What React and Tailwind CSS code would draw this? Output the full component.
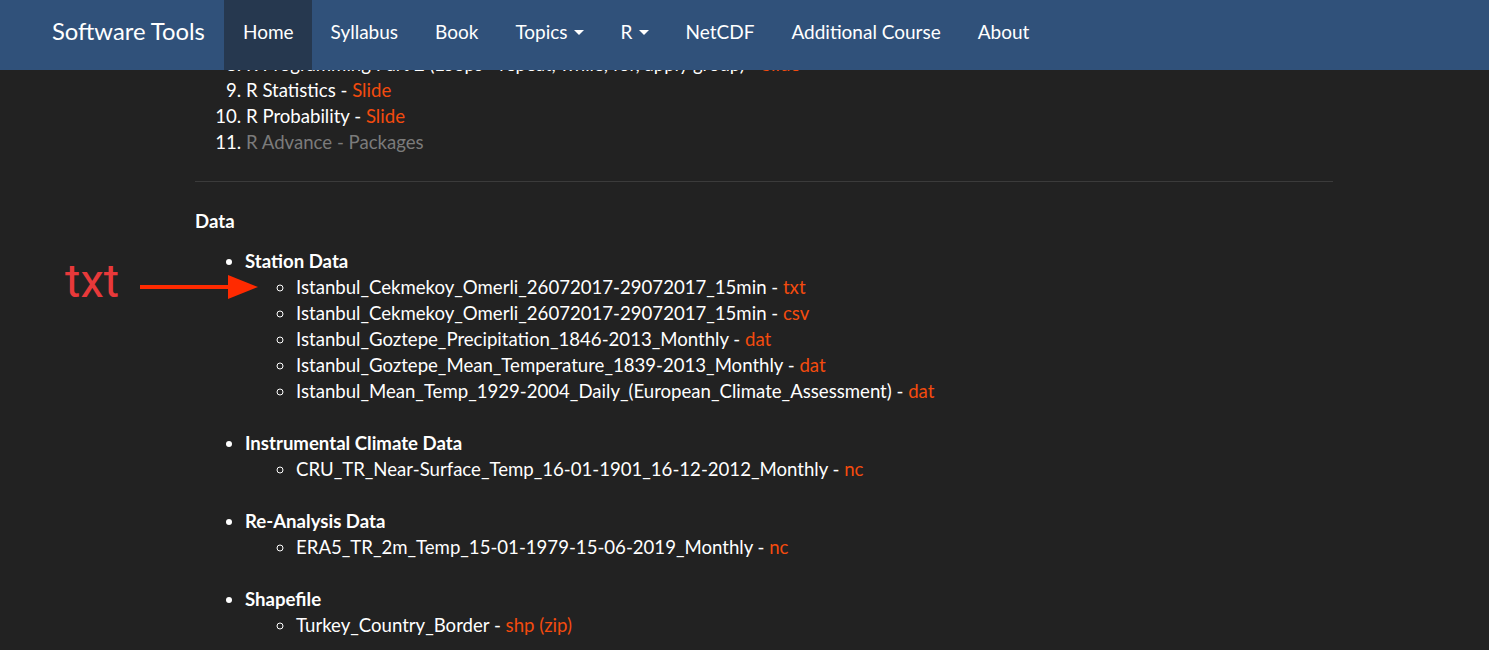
import React from "react";

const LINK = "text-[#f44b0e]";

function Caret() {
  return <span className="inline-block ml-[6px] align-middle w-0 h-0 border-l-[5px] border-r-[5px] border-t-[5px] border-l-transparent border-r-transparent border-t-white" />;
}

function NavItem({ children, active, caret }) {
  return (
    <div className={`h-full flex items-center px-[18.5px] pb-[6px] ${active ? "bg-[#26384f]" : ""}`}>
      <span>{children}</span>
      {caret && <Caret />}
    </div>
  );
}

function Sub({ name, link }) {
  return (
    <li className="list-[circle]">
      {name} - <span className={LINK}>{link}</span>
    </li>
  );
}

export default function App() {
  return (
    <div className="min-h-[650px] bg-[#222222] text-white text-[18.6px] leading-[26px] relative overflow-hidden" style={{ fontFamily: "Lato, 'Noto Sans', sans-serif" }}>
      <nav className="fixed top-0 left-0 right-0 h-[70px] bg-[#30517a] z-10 flex items-stretch text-white">
        <div className="flex items-center pl-[52px] pr-[19.5px] text-[23.8px] pb-[8px]">Software Tools</div>
        <div className="flex items-stretch text-[19px]">
          <NavItem active>Home</NavItem>
          <NavItem>Syllabus</NavItem>
          <NavItem>Book</NavItem>
          <NavItem caret>Topics</NavItem>
          <NavItem caret>R</NavItem>
          <NavItem>NetCDF</NavItem>
          <NavItem>Additional Course</NavItem>
          <NavItem>About</NavItem>
        </div>
      </nav>

      <div className="relative ml-[195px] w-[1138px] pt-[51px]">
        <ol start={8} className="list-decimal pl-[51px]">
          <li>R Programming Part 2 (Loops - repeat, while, for, apply group) - <span className={LINK}>Slide</span></li>
          <li>R Statistics - <span className={LINK}>Slide</span></li>
          <li>R Probability - <span className={LINK}>Slide</span></li>
          <li><span className="text-[#7b7b7b]">R Advance - Packages</span></li>
        </ol>
        <hr className="mt-[26px] border-0 border-t border-[#3b3b3b]" />
        <div className="mt-[26px] font-bold">Data</div>
        <ul className="mt-[14px] pl-[50px] list-disc">
          <li className="font-bold">
            Station Data
            <ul className="pl-[51px] font-normal">
              <Sub name="Istanbul_Cekmekoy_Omerli_26072017-29072017_15min" link="txt" />
              <Sub name="Istanbul_Cekmekoy_Omerli_26072017-29072017_15min" link="csv" />
              <Sub name="Istanbul_Goztepe_Precipitation_1846-2013_Monthly" link="dat" />
              <Sub name="Istanbul_Goztepe_Mean_Temperature_1839-2013_Monthly" link="dat" />
              <Sub name="Istanbul_Mean_Temp_1929-2004_Daily_(European_Climate_Assessment)" link="dat" />
            </ul>
          </li>
          <li className="font-bold mt-[26px]">
            Instrumental Climate Data
            <ul className="pl-[51px] font-normal">
              <Sub name="CRU_TR_Near-Surface_Temp_16-01-1901_16-12-2012_Monthly" link="nc" />
            </ul>
          </li>
          <li className="font-bold mt-[26px]">
            Re-Analysis Data
            <ul className="pl-[51px] font-normal">
              <Sub name="ERA5_TR_2m_Temp_15-01-1979-15-06-2019_Monthly" link="nc" />
            </ul>
          </li>
          <li className="font-bold mt-[26px]">
            Shapefile
            <ul className="pl-[51px] font-normal">
              <Sub name="Turkey_Country_Border" link="shp (zip)" />
            </ul>
          </li>
        </ul>
      </div>

      <div className="absolute left-[65px] top-[257px] text-[#e8393a] text-[47px] leading-[47px]" style={{ fontFamily: "Roboto, sans-serif" }}>txt</div>
      <svg className="absolute left-[138px] top-[273px]" width="124" height="28" viewBox="0 0 124 28">
        <rect x="2" y="12" width="92" height="4" fill="#ff2a00" />
        <polygon points="90,2 120,14 90,26" fill="#ff2a00" />
      </svg>
    </div>
  );
}
